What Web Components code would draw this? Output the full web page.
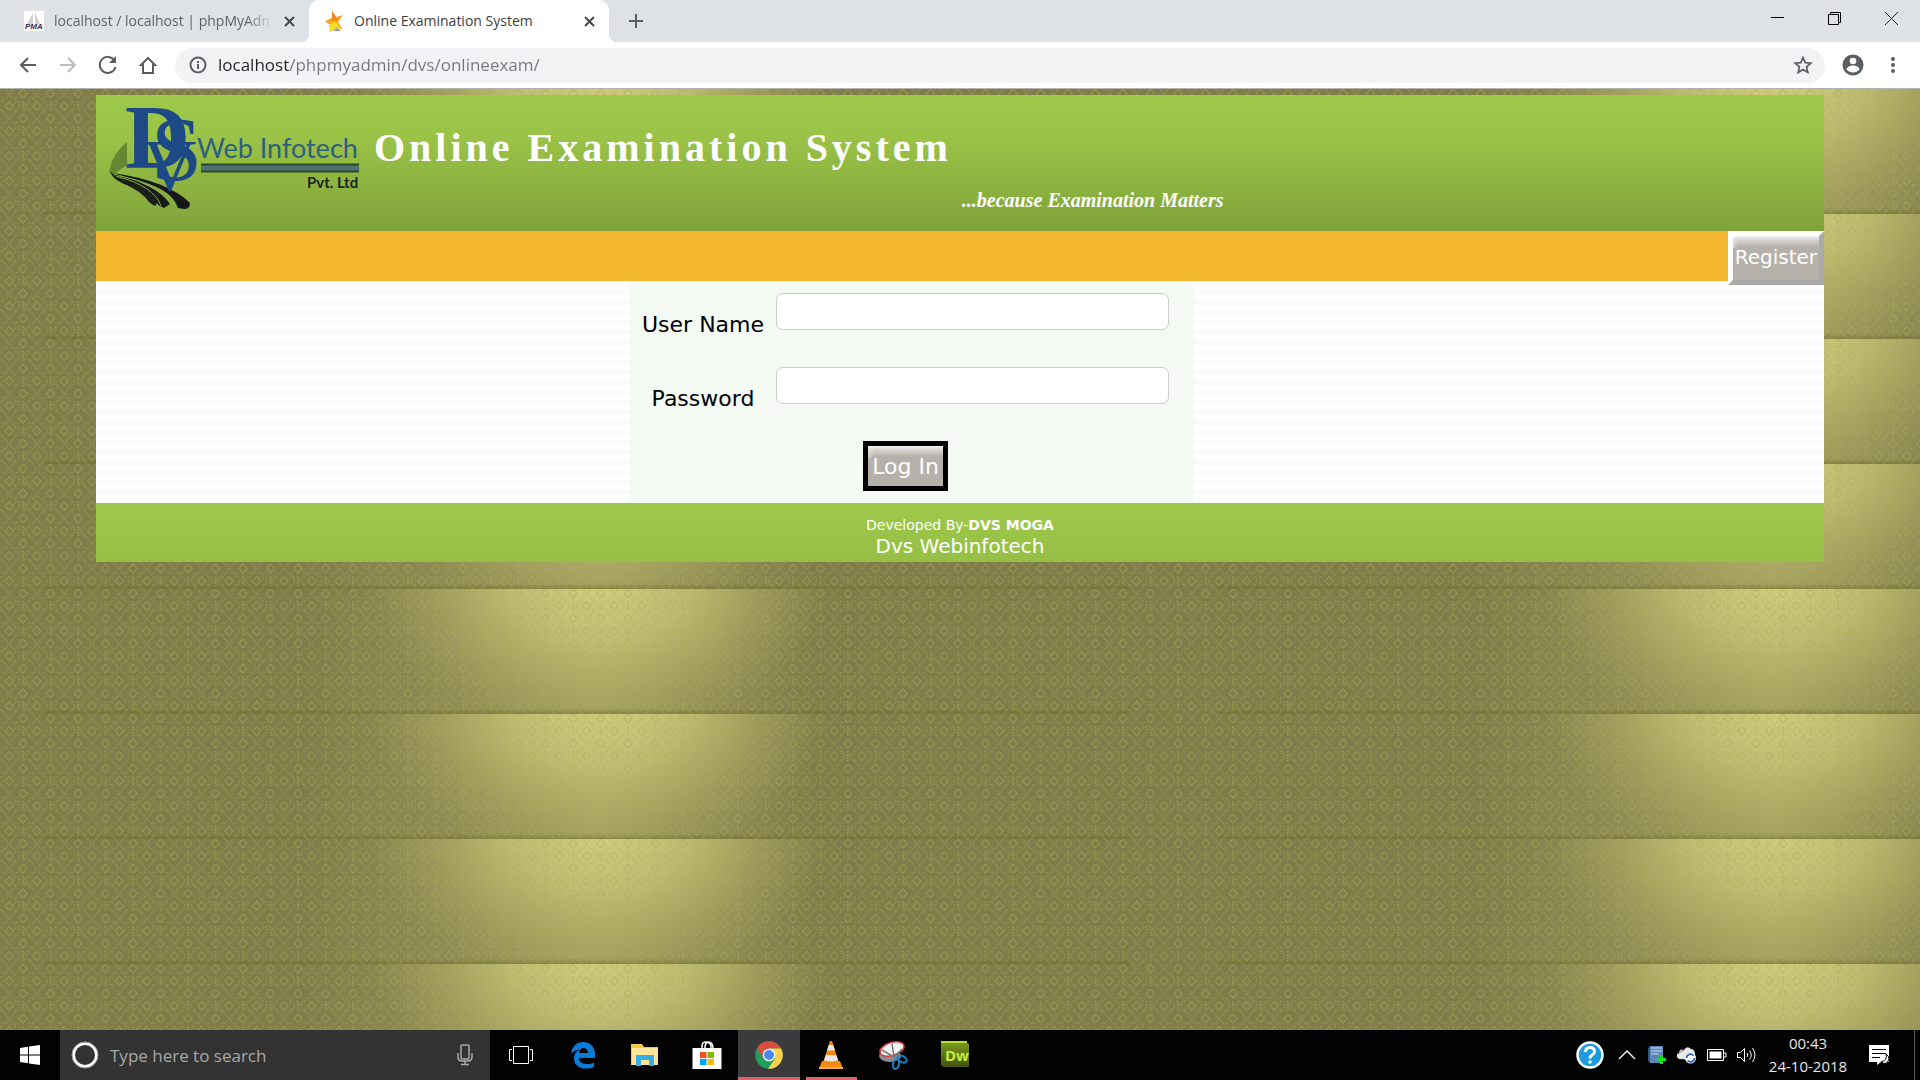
<!DOCTYPE html>
<html lang="en">
<head>
<meta charset="utf-8">
<title>Online Examination System</title>
<style>
  html, body { margin: 0; height: 100%; }
  body { font-family: "Open Sans", "Noto Sans", sans-serif; overflow: hidden; }
</style>
</head>
<body>
<desktop-shell>
  <tab-strip slot="tabs">
    <browser-tab label="localhost / localhost | phpMyAdmin"><svg width="20" height="20" viewBox="0 0 20 20"><rect width="20" height="20" fill="#fff"/><path d="M9 2L3 13h6zM11 1v12h5zM13 3l4 10" fill="#d2d2d2"/><text x="1" y="18" font-family="Liberation Sans" font-weight="bold" font-style="italic" font-size="8" fill="#33264f">PMA</text></svg></browser-tab>
    <browser-tab label="Online Examination System" active><svg width="20" height="22" viewBox="0 0 20 22"><path d="M8 1l4 6 7-2-5 7 4 7-6-1-6 4 0-7-5-4 7-3z" fill="#f7a21b"/><path d="M5 16l3-4 5 1 3 5-4-1-6 4z" fill="#f4e21a"/><path d="M8 1l4 6 1 3-5 1z" fill="#f0861c"/><path d="M13 18l4 3h-8z" fill="#999"/></svg></browser-tab>
  </tab-strip>
  <address-toolbar slot="toolbar"></address-toolbar>
  <exam-page>
    <exam-header slot="header"></exam-header>
    <exam-nav slot="nav"><gloss-button kind="outset">Register</gloss-button></exam-nav>
    <login-form slot="main"></login-form>
    <exam-footer slot="footer"></exam-footer>
  </exam-page>
  <task-bar slot="taskbar"></task-bar>
</desktop-shell>
<script>
function define(name, html, setup) {
  const template = document.createElement('template');
  template.innerHTML = html;
  customElements.define(name, class extends HTMLElement {
    constructor() {
      super();
      this.attachShadow({ mode: 'open' }).appendChild(template.content.cloneNode(true));
    }
    connectedCallback() { if (setup) setup(this, this.shadowRoot); }
  });
}

define('desktop-shell', `
<style>
  :host { display: flex; flex-direction: column; height: 100vh; }
  main { flex: 1; min-height: 0; display: flex; }
  main ::slotted(*) { flex: 1; }
</style>
<slot name="tabs"></slot>
<slot name="toolbar"></slot>
<main><slot></slot></main>
<slot name="taskbar"></slot>`);

define('tab-strip', `
<style>
  :host { display: flex; height: 42px; background: #dee1e6; color: #5f6368; }
  button { border: 0; padding: 0; background: none; display: grid; place-items: center; }
  .new { width: 54px; }
  .win { margin-left: auto; display: flex; }
  .win button { width: 57px; height: 38px; }
</style>
<slot></slot>
<button class="new" aria-label="New tab"><svg width="16" height="16"><path d="M8 1v14M1 8h14" stroke="#5a5e63" stroke-width="2"/></svg></button>
<div class="win">
  <button aria-label="Minimise"><svg width="14" height="14"><path d="M0 5.500h13" stroke="#000"/></svg></button>
  <button aria-label="Restore"><svg width="14" height="14" fill="none" stroke="#000"><path d="M.5 2.500h10v10h-10zM2.500 2V.5h10v10H11"/></svg></button>
  <button aria-label="Close"><svg width="14" height="14"><path d="M0 0l13 13M13 0L0 13" stroke="#222"/></svg></button>
</div>`);

define('browser-tab', `
<style>
  :host { display: flex; align-items: center; box-sizing: border-box; width: 309px; padding: 0 12px 0 24px; position: relative; }
  :host([active]) { width: 300px; padding-left: 15px; background: #fff; border-radius: 10px 10px 0 0; color: #3c4043; }
  :host([active])::before, :host([active])::after { content: ""; position: absolute; bottom: 0; width: 8px; height: 8px; }
  :host([active])::before { left: -8px; background: radial-gradient(circle at 0 0, transparent 8px, #fff 8px); }
  :host([active])::after { right: -8px; background: radial-gradient(circle at 100% 0, transparent 8px, #fff 8px); }
  button { border: 0; background: none; padding: 0; font: 14px/20px "Open Sans", sans-serif; color: inherit; }
  .name { flex: 1; min-width: 0; text-align: left; overflow: hidden; white-space: nowrap; margin-left: 10px;
    -webkit-mask-image: linear-gradient(90deg, #000 88%, transparent 100%); }
  :host([active]) .name { -webkit-mask-image: none; }
  .x { width: 16px; height: 20px; margin-left: 8px; display: grid; place-items: center; }
</style>
<slot></slot>
<button class="name"></button>
<button class="x" aria-label="Close tab"><svg width="11" height="11"><path d="M1 1l9 9M10 1l-9 9" stroke="#45494d" stroke-width="2"/></svg></button>`,
(host, root) => { root.querySelector('.name').textContent = host.getAttribute('label'); });

define('address-toolbar', `
<style>
  :host { display: flex; align-items: center; height: 46px; background: #fff; border-bottom: 1px solid #b4b2ac; padding: 0 7px 0 8px; }
  button { width: 40px; height: 40px; padding: 0; border: 0; background: none; display: grid; place-items: center; }
  .box { flex: 1; display: flex; align-items: center; height: 35px; border-radius: 18px; background: #f1f3f4; margin: 0 8px 0 7px; padding: 0 7px 0 14px; }
  input { flex: 1; border: 0; outline: 0; padding: 0; margin-left: 11px; height: 24px; font: 17px/24px "Open Sans", sans-serif; color: #72777c;
    background: linear-gradient(90deg, #202124 71px, #72777c 71px); -webkit-background-clip: text; -webkit-text-fill-color: transparent; }
  .star { width: 30px; }
</style>
<button aria-label="Back"><svg width="20" height="20" fill="none" stroke="#5a5e63" stroke-width="2"><path d="M18 10H3M10 3l-7 7 7 7"/></svg></button>
<button aria-label="Forward"><svg width="20" height="20" fill="none" stroke="#babcbe" stroke-width="2"><path d="M2 10h15M10 3l7 7-7 7"/></svg></button>
<button aria-label="Reload"><svg width="20" height="20" fill="none" stroke="#5a5e63" stroke-width="2"><path d="M16.500 5.500A8 8 0 1 0 17.500 12"/><path d="M18 1v7h-7z" fill="#5a5e63" stroke="none"/></svg></button>
<button aria-label="Home"><svg width="20" height="20" fill="none" stroke="#5a5e63" stroke-width="2"><path d="M10 3l-7 7h2v8h10v-8h2z"/></svg></button>
<div class="box">
  <svg width="18" height="18" fill="none" stroke="#5a5e63" stroke-width="2"><circle cx="9" cy="9" r="7.500"/><path d="M9 8v5M9 5v2"/></svg>
  <input aria-label="Address" value="localhost/phpmyadmin/dvs/onlineexam/">
  <button class="star" aria-label="Bookmark"><svg width="20" height="20" fill="none" stroke="#5a5e63" stroke-width="1.700"><path d="M10 2.500l2.200 5.200 5.600.5-4.200 3.700 1.200 5.500-4.800-2.900-4.800 2.900 1.200-5.500L2.200 8.200l5.600-.5z"/></svg></button>
</div>
<button aria-label="Profile"><svg width="22" height="22"><circle cx="11" cy="11" r="10.500" fill="#5a5e63"/><circle cx="11" cy="7" r="3.300" fill="#fff"/><path d="M4.500 15.500a6.500 4 0 0 1 13 0a8.500 8.500 0 0 1-13 0z" fill="#fff"/></svg></button>
<button aria-label="Menu"><svg width="6" height="18" fill="#5a5e63"><circle cx="3" cy="3" r="2"/><circle cx="3" cy="9" r="2"/><circle cx="3" cy="15" r="2"/></svg></button>`);

define('exam-page', `
<style>
  :host { display: block; position: relative; overflow: hidden; background: #817f4d; font-family: Verdana, "DejaVu Sans", sans-serif; }
  .wall { position: absolute; inset: 0; width: 100%; height: 100%; }
  .sheet { position: relative; width: 90%; margin: 6px auto 0; }
</style>
<svg class="wall" aria-hidden="true">
  <defs>
    <radialGradient id="glow" gradientUnits="userSpaceOnUse" cx="0" cy="0" r="1" gradientTransform="translate(600 -15) scale(235 165)">
      <stop offset="0" stop-color="#d2cd7f"/><stop offset=".4" stop-color="#d0cb7d" stop-opacity=".7"/><stop offset=".7" stop-color="#c8c374" stop-opacity=".3"/><stop offset="1" stop-color="#b4af66" stop-opacity="0"/>
    </radialGradient>
    <linearGradient id="beam" gradientUnits="userSpaceOnUse" x1="300" y1="0" x2="815" y2="0">
      <stop offset="0" stop-color="#ccc77a" stop-opacity="0"/><stop offset=".3" stop-color="#ccc77a" stop-opacity=".2"/><stop offset=".58" stop-color="#ccc77a" stop-opacity=".42"/><stop offset=".78" stop-color="#ccc77a" stop-opacity=".22"/><stop offset="1" stop-color="#ccc77a" stop-opacity="0"/>
    </linearGradient>
    <linearGradient id="seam" x1="0" y1="0" x2="0" y2="1"><stop offset="0" stop-color="#6f6c28" stop-opacity="0"/><stop offset="1" stop-color="#6f6c28" stop-opacity=".5"/></linearGradient>
    <pattern id="tile" width="1175" height="125" patternUnits="userSpaceOnUse">
      <rect width="1175" height="125" fill="#807d4c"/>
      <rect width="1175" height="125" fill="url(#beam)"/>
      <rect width="1175" height="125" fill="url(#glow)"/>
      <rect x="43" y="119" width="1087" height="6" fill="url(#seam)"/>
    </pattern>
    <pattern id="weave" width="27.500" height="25" patternUnits="userSpaceOnUse" x="-4.500" y="11">
      <g fill="none" stroke="#aaae4c" stroke-opacity=".6" stroke-width="1.100">
        <path d="M13.700 1.500l4 4.500-4 4.500-4-4.500zM0 14l4 4.500-4 4.500M27.500 14l-4 4.500 4 4.500"/>
        <path stroke-opacity=".48" stroke-dasharray="2 1" d="M5 1l-2 5 3 5 5 4 2 4-2 4M22.500 1l2 5-3 5-5 4-2 4 2 4M0 1v10M27 1v10M11 24l-6-2M17 24l6-2M2 3l-2 3 2 4M7 0v4M20 0v4M7 9v3M20 9v3"/>
      </g>
    </pattern>
  </defs>
  <rect width="100%" height="100%" fill="url(#tile)"/>
  <rect width="100%" height="100%" fill="url(#weave)"/>
</svg>
<div class="sheet">
  <slot name="header"></slot><slot name="nav"></slot><slot name="main"></slot><slot name="footer"></slot>
</div>`);

define('exam-header', `
<style>
  :host { display: flex; align-items: flex-start; box-sizing: border-box; height: 136px; padding: 12px; background: linear-gradient(#9dc94a, #9ac347 30%, #80a33a); color: #fff; font-family: "Liberation Serif", serif; }
  svg { overflow: visible; }
  h1 { margin: 17px 0 0 14px; font-size: 40px; line-height: 48px; letter-spacing: 4px; white-space: nowrap; }
  p { margin: 81px 0 0 10px; font: italic bold 20px/24px "Liberation Serif", serif; white-space: nowrap; }
</style>
<svg width="252" height="104" viewBox="0 0 252 104" role="img" aria-label="DVS Web Infotech Pvt. Ltd">
  <path d="M2 62Q4 47 19 35V58L4 68z" fill="#4b6b2b" opacity=".65"/>
  <path d="M1 62Q3 68 16 73Q44 83 50 95L47 99L42 96Q34 84 14 76Q3 71 1 62z" fill="#1b1e19"/>
  <path d="M5 67Q50 78 62 97L56 101L50 98Q46 84 20 75z" fill="#171a16"/>
  <path d="M5 66Q60 74 82 96Q82 102 76 102L70 101Q64 82 30 74z" fill="#15171a"/>
  <path d="M8 69Q46 79 53 99M12 69Q58 78 66 100" stroke="#86a946" fill="none"/>
  <g font-family="Liberation Serif" fill="#1d4a86">
    <text x="35" y="84" font-size="74">V</text>
    <text x="43" y="73" font-size="92">S</text>
    <text x="17" y="61" font-size="90" font-weight="bold">D</text>
  </g>
  <text x="89" y="51" font-family="Lato" font-size="27" fill="#2f5f80">Web Infotech</text>
  <path d="M93 58h158v7H93z" fill="#4d7378"/><path d="M93 57.500h158M93 64.500h158" stroke="#2e4a25" stroke-width="2"/>
  <text x="199" y="81" font-family="Lato" font-size="15" font-weight="bold" fill="#1b231b">Pvt. Ltd</text>
</svg>
<h1>Online Examination System</h1>
<p>...because Examination Matters</p>`);

define('exam-nav', `
<style>
  :host { display: flex; justify-content: flex-end; align-items: flex-start; height: 50px; background: #f3b72f; position: relative; z-index: 1; }
</style><slot></slot>`);

define('gloss-button', `
<style>
  :host { display: inline-block; }
  button { display: block; border: 5px solid #000; padding: 2px 4px 0; height: 50px; line-height: 38px; font-family: inherit; font-size: 22px; color: #fff;
    background: linear-gradient(90deg, rgba(240,239,236,.5), transparent 6px) 0 0/100% 12px no-repeat, linear-gradient(#f4f3f1, #d6d4d0 4px, #b5b0aa 11px) padding-box; }
  :host([kind=outset]) button { border-color: #fff #aaa #aaa #fff; font-size: 20px; height: 54px; padding: 0 2px 2px; line-height: 42px; }
</style>
<button><slot></slot></button>`);

define('login-form', `
<style>
  :host { display: grid; grid-template-columns: 534fr 563px 631fr; background: repeating-linear-gradient(#f9fbfa 0 3px, #fff 5px 8px, #f9fbfa 10px); }
  form { grid-column: 2; display: flex; flex-direction: column; box-sizing: border-box; padding: 12px 24px 12px 12px; background: #f4f9f4; font-size: 22px; }
  gloss-button { align-self: center; }
</style>
<form onsubmit="return false">
  <form-field label="User Name"></form-field>
  <form-field label="Password" type="password"></form-field>
  <gloss-button>Log In</gloss-button>
</form>`);

define('form-field', `
<style>
  :host { display: flex; gap: 12px; height: 74px; align-items: flex-start; }
  label { width: 122px; margin-top: 17px; line-height: 30px; text-align: center; white-space: nowrap; color: #000; }
  input { flex: 1; min-width: 0; box-sizing: border-box; height: 37px; border: 1px solid #ccc; border-radius: 7px; background: #fff; padding: 0 12px; font: inherit; }
</style>
<label for="field"></label><input id="field">`,
(host, root) => {
  root.querySelector('label').textContent = host.getAttribute('label');
  root.querySelector('input').type = host.getAttribute('type') || 'text';
});

define('exam-footer', `
<style>
  :host { display: block; padding: 12px 0 5px; text-align: center; color: #fff; background: linear-gradient(#9dc94a, #96bf46); font-size: 14px; line-height: 20px; }
  a { display: block; color: inherit; text-decoration: none; font-size: 20px; line-height: 22px; }
</style>
Developed By-<b>DVS MOGA</b><a href="#">Dvs Webinfotech</a>`);

define('task-bar', `
<style>
  :host { display: flex; height: 50px; background: #020202; color: #e8e8e8; font: 15px/23px "Open Sans", sans-serif; }
  button { border: 0; padding: 0; background: none; color: inherit; font: inherit; display: grid; place-items: center; width: 62px; box-sizing: border-box; }
  .start { width: 60px; }
  .search { width: 430px; display: flex; align-items: center; background: #333; padding: 0 16px 0 11px; box-sizing: border-box; }
  input { flex: 1; min-width: 0; border: 0; outline: 0; background: none; padding: 1px 0 0; margin-left: 11px; font: 17px/24px "Open Sans", sans-serif; color: #b0b0b0; }
  input::placeholder { color: #a8a8a8; opacity: 1; }
  .current { background: #3b3b3d; border-bottom: 3px solid #dc6463; padding-top: 3px; }
  .open { background: linear-gradient(#dc6463, #dc6463) 50% 100%/51px 3px no-repeat; }
  .tray { margin-left: auto; display: flex; }
  .tray button { width: 30px; }
  .tray .help { width: 44px; }
  .tray .clock { width: 92px; place-content: center; white-space: nowrap; }
  .tray .note { width: 50px; }
  .edge { border-left: 1px solid #555; width: 5px; margin-left: 10px; }
</style>
<button class="start" aria-label="Start"><svg width="20" height="20" fill="#fff"><path d="M0 3l8-1.200V9.500H0zM9 1.600L20 0v9.500H9zM0 10.500h8v7.700L0 17zM9 10.500h11V20L9 18.400z"/></svg></button>
<div class="search">
  <svg width="28" height="28"><circle cx="14" cy="14" r="11.500" fill="none" stroke="#fff" stroke-width="3"/><circle cx="14" cy="14" r="13" fill="none" stroke="#999"/></svg>
  <input aria-label="Search" placeholder="Type here to search">
  <svg width="18" height="22" fill="none" stroke="#aaa" stroke-width="1.500"><rect x="5" y="1" width="8" height="14" rx="1"/><path d="M2 9v4q0 4 4 4h6q4 0 4-4V9M9 17v3M5 20.500h8"/></svg>
</div>
<button aria-label="Task view"><svg width="26" height="20" fill="none" stroke="#fff"><path d="M5.500 1.500h15v17h-15zM4 4.500H1.500v11H4M22 4.500h2.500v11H22"/></svg></button>
<button aria-label="Edge"><svg width="26" height="28" viewBox="0 0 26 28"><path d="M1 13C2 5 7 1 13 1c8 0 12 6 12 12v4H9c0 4 4 6 8 6 3 0 5-.6 7-1.600V26c-3 1.200-5 1.600-8 1.600C8 27.600 4 23 4 17.500 4 13 6.500 10 10 8.500 5.500 8.800 3 10.500 1 13zM9.200 12h8.600c0-3-1.600-5-4.200-5s-4.200 2-4.400 5z" fill="#0a7cd8"/></svg></button>
<button aria-label="File Explorer"><svg width="28" height="24"><path d="M0 1h11l2 3h14v18H0z" fill="#f3c84a"/><path d="M1 5h26v17H1z" fill="#ffe595"/><path d="M5 12h18v11h-5v-6h-8v6H5z" fill="#35aee4"/></svg></button>
<button aria-label="Store"><svg width="30" height="30"><path d="M10 9V6q0-4 4-4t5 4v3M13 9V6q1-4 4-4 4 1 4 6" fill="none" stroke="#fff" stroke-width="1.500"/><path d="M.5 8h29v21H.5z" fill="#fff"/><path d="M8 12h6.500v6H8z" fill="#f25022"/><path d="M15.500 12H22v6h-6.500z" fill="#7fba00"/><path d="M8 19h6.500v6H8z" fill="#00a4ef"/><path d="M15.500 19H22v6h-6.500z" fill="#ffb900"/></svg></button>
<button class="current" aria-label="Chrome"><svg width="28" height="28" viewBox="0 0 28 28"><circle cx="14" cy="14" r="13.700" fill="#1fa05a"/><path d="M14 14L2 7.400A13.700 13.700 0 0 1 26 7.400H14z" fill="#dc4c3f"/><path d="M14 7.400h12A13.700 13.700 0 0 1 13 27.700l7-10z" fill="#ffd04b"/><path d="M2 7.200L9 18l4-10z" fill="#dc4c3f"/><circle cx="14" cy="14" r="6.300" fill="#fff"/><circle cx="14" cy="14" r="5" fill="#4a88ee"/></svg></button>
<button class="open" aria-label="VLC"><svg width="26" height="30"><path d="M4 21h18l3 8H1z" fill="#f58a13"/><path d="M12 1h2l7 22q-8 3-16 0z" fill="#f7860f"/><path d="M10.800 5h4.400l1.800 5.500H9zM7.800 15h10.500l1.700 5.500q-7 2-14 0z" fill="#e7e7e7"/><path d="M1 27h24v2H1z" fill="#ffb04d"/></svg></button>
<button aria-label="Snipping Tool"><svg width="30" height="30"><ellipse cx="12" cy="16" rx="11" ry="6" fill="#8b8c90"/><ellipse cx="14" cy="9" rx="12.500" ry="6.500" transform="rotate(-18 14 9)" fill="#f2f2f2" stroke="#d13c40" stroke-width="1.500"/><path d="M4 10l12 7M14 4l2 13M16 17l8-8" stroke="#777" fill="none" stroke-width="1.500"/><g fill="none" stroke="#1883cb" stroke-width="2"><ellipse cx="18" cy="24" rx="3" ry="5" transform="rotate(10 18 24)"/><ellipse cx="24" cy="19" rx="3" ry="5" transform="rotate(-60 24 19)"/></g></svg></button>
<button aria-label="Dreamweaver"><svg width="28" height="28"><defs><linearGradient id="dw" x2="0" y2="1"><stop stop-color="#7fa01c"/><stop offset="1" stop-color="#41500f"/></linearGradient></defs><path d="M0 0h26v2l2 1v23H2l-2-2z" fill="url(#dw)"/><path d="M0 0h26v2H0z" fill="#b5de35"/><text x="4" y="20" font-family="Open Sans" font-weight="bold" font-size="15" fill="#c6ee3c">Dw</text></svg></button>
<div class="tray">
  <button class="help" aria-label="Help"><svg width="28" height="28"><circle cx="14" cy="14" r="12.500" fill="#1b9be0" stroke="#fff" stroke-width="2.500"/><path d="M9.500 11q0-4.500 4.500-4.500t4.500 4q0 2-2.500 3.500-2 1.200-2 3.500" fill="none" stroke="#fff" stroke-width="3"/><circle cx="14" cy="21" r="1.800" fill="#fff"/></svg></button>
  <button aria-label="Show hidden icons"><svg width="18" height="10"><path d="M1 9l8-8 8 8" fill="none" stroke="#fff" stroke-width="1.300"/></svg></button>
  <button aria-label="Server"><svg width="20" height="20"><path d="M3 1h13v17H3z" fill="#5b87b8"/><path d="M1 3l2-2v17l-2-2z" fill="#35587f"/><path d="M4 3h11M4 6h11M4 9h8" stroke="#c7d9ec"/><path d="M13 10h3v3h3v3h-3v3h-3v-3h-3v-3h3z" fill="#15e315"/></svg></button>
  <button aria-label="Sync"><svg width="22" height="18"><path d="M3 13a3.500 3.500 0 0 1 0-6.500Q4 2 8 4q3-5 7-1 3 0 4 4v7z" fill="#e9e9e9"/><path d="M2 8q3-3 6-4" stroke="#777" fill="none"/><circle cx="14.500" cy="12" r="5.500" fill="#fff"/><path d="M10.500 12a4 4 0 0 1 7-2.500M18.500 12a4 4 0 0 1-7 2.500" stroke="#2f62b8" stroke-width="1.700" fill="none"/></svg></button>
  <button aria-label="Battery"><svg width="20" height="12"><path d="M.5.500h16v11H.5zM17 4h2v4h-2" fill="none" stroke="#fff"/><path d="M2.500 2.500h12v7h-12z" fill="#fff"/></svg></button>
  <button aria-label="Volume"><svg width="22" height="18" fill="none" stroke="#fff"><path d="M1.500 6.500h3l4-4v13l-4-4h-3zM11 7q1.500 2 0 4M13.500 4.500q3.500 4.500 0 9M16.500 2q5 7 0 14"/></svg></button>
  <button class="clock"><span>00:43</span><span>24-10-2018</span></button>
  <button class="note" aria-label="Notifications"><svg width="22" height="20"><path d="M1 0h20v17h-8l-4 3v-3H1z" fill="#fff"/><path d="M4 4.500h14M4 8.500h14M4 12.500h8" stroke="#000"/><path d="M18 9q2 6-5 8 6 4 8-3 0-3-3-5z" fill="#fff" stroke="#000"/></svg></button>
  <span class="edge"></span>
</div>`);
</script>
</body>
</html>
